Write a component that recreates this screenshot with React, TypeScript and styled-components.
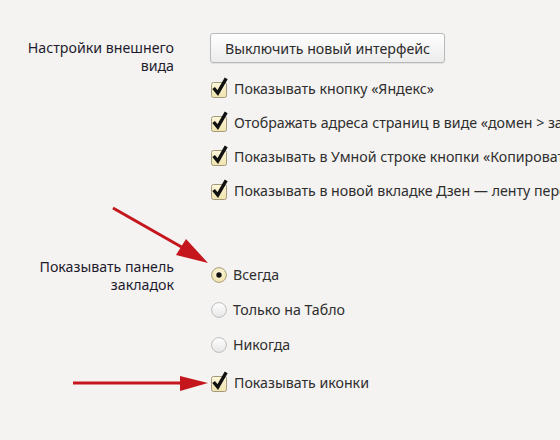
import React from "react";
import styled, { createGlobalStyle } from "styled-components";

const Global = createGlobalStyle`
  html, body { margin: 0; padding: 0; background: #f4f3f1; overflow: hidden; }
  body { width: 560px; height: 440px; font-family: "Noto Sans", "Open Sans", sans-serif; }
`;

const Page = styled.div`
  position: relative;
  width: 560px;
  height: 440px;
  padding-top: 33px;
  box-sizing: border-box;
  display: flex;
  flex-direction: column;
  gap: 49px;
  color: #2b2b2b;
  font-size: 14.2px;
  overflow: hidden;
`;

const Section = styled.div`
  display: grid;
  grid-template-columns: 174px 1fr;
  column-gap: 36px;
`;

const Label = styled.div<{ $pad: number }>`
  text-align: right;
  line-height: 18px;
  padding-top: ${(p) => p.$pad}px;
  color: #1f1b2e;
`;

const Controls = styled.div`
  display: flex;
  flex-direction: column;
  min-width: 0;
`;

const Button = styled.button`
  align-self: flex-start;
  height: 30px;
  width: 235px;
  padding: 0;
  margin-bottom: 9px;
  border: 1px solid #b9b9b9;
  border-radius: 3px;
  background: linear-gradient(#ffffff, #ececec);
  box-shadow: 0 1px 1px rgba(0, 0, 0, 0.08);
  font-family: inherit;
  font-size: 14.2px;
  color: #2b2b2b;
`;

const Row = styled.div<{ $h: number }>`
  height: ${(p) => p.$h}px;
  display: flex;
  align-items: center;
  gap: 6px;
  white-space: nowrap;
  margin-left: 1px;
  & > svg { flex-shrink: 0; }
`;

const Text = styled.span`
  line-height: 18px;
  color: #2e2e2e;
`;

const Overlay = styled.svg`
  position: absolute;
  left: 0;
  top: 0;
  pointer-events: none;
`;

function CheckIcon() {
  return (
    <svg width="17" height="21" viewBox="0 0 17 21" style={{ marginTop: -4 }}>
      <defs>
        <linearGradient id="cbg" x1="0" y1="0" x2="0" y2="1">
          <stop offset="0" stopColor="#fdf7dc" />
          <stop offset="1" stopColor="#efe2ac" />
        </linearGradient>
      </defs>
      <rect x="0.5" y="5.5" width="15" height="15" rx="2" fill="url(#cbg)" stroke="#a39a7c" />
      <path d="M2.6 11 L6.8 16 L15.2 1.4" fill="none" stroke="#111" strokeWidth="3.4" strokeLinejoin="miter" />
    </svg>
  );
}

function RadioIcon({ on }: { on?: boolean }) {
  return (
    <svg width="16" height="16" viewBox="0 0 16 16">
      <defs>
        <radialGradient id="ron" cx="0.5" cy="0.4" r="0.6">
          <stop offset="0" stopColor="#fffbe6" />
          <stop offset="1" stopColor="#efe0a8" />
        </radialGradient>
        <linearGradient id="roff" x1="0" y1="0" x2="0" y2="1">
          <stop offset="0" stopColor="#ffffff" />
          <stop offset="1" stopColor="#e6e6e6" />
        </linearGradient>
      </defs>
      <circle cx="8" cy="8" r="7.4" fill={on ? "url(#ron)" : "url(#roff)"} stroke={on ? "#a9a07f" : "#bdbdbd"} />
      {on && <circle cx="8" cy="8" r="2.7" fill="#111" />}
    </svg>
  );
}

const checks = [
  "Показывать кнопку «Яндекс»",
  "Отображать адреса страниц в виде «домен > заголовок»",
  "Показывать в Умной строке кнопки «Копировать» и «Поделиться»",
  "Показывать в новой вкладке Дзен — ленту персональных рекомендаций",
];

export default function App() {
  return (
    <>
      <Global />
      <Page>
        <Section>
          <Label $pad={6}>
            Настройки внешнего
            <br />
            вида
          </Label>
          <Controls>
            <Button>Выключить новый интерфейс</Button>
            {checks.map((t) => (
              <Row key={t} $h={34}>
                <CheckIcon />
                <Text>{t}</Text>
              </Row>
            ))}
          </Controls>
        </Section>
        <Section>
          <Label $pad={1}>
            Показывать панель
            <br />
            закладок
          </Label>
          <Controls>
            <Row $h={35}>
              <RadioIcon on />
              <Text>Всегда</Text>
            </Row>
            <Row $h={35}>
              <RadioIcon />
              <Text>Только на Табло</Text>
            </Row>
            <Row $h={35}>
              <RadioIcon />
              <Text>Никогда</Text>
            </Row>
            <Row $h={34} style={{ marginTop: 4 }}>
              <CheckIcon />
              <Text>Показывать иконки</Text>
            </Row>
          </Controls>
        </Section>
        <Overlay width="560" height="440" viewBox="0 0 560 440">
          <line x1="113" y1="208" x2="185" y2="249" stroke="#c4161c" strokeWidth="3" />
          <polygon points="208,263 176,255 186,239" fill="#c4161c" />
          <line x1="73" y1="383" x2="182" y2="383" stroke="#c4161c" strokeWidth="3" />
          <polygon points="208,383 180,376 180,391" fill="#c4161c" />
        </Overlay>
      </Page>
    </>
  );
}
